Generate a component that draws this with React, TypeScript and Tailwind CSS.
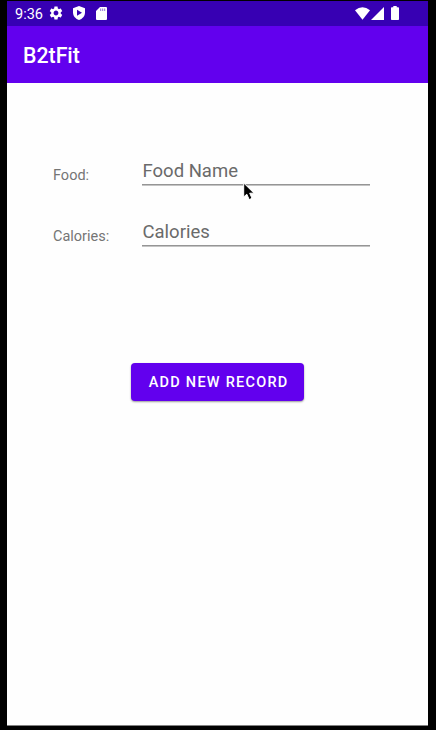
import React from "react";

function SettingsIcon() {
  return (
    <svg className="mb-px ml-[5px] h-[16px] w-[16px] shrink-0" viewBox="0 0 24 24" fill="#fff">
      <path d="M19.14 12.94c.04-.3.06-.61.06-.94 0-.32-.02-.64-.07-.94l2.03-1.58c.18-.14.23-.41.12-.61l-1.92-3.32c-.12-.22-.37-.29-.59-.22l-2.39.96c-.5-.38-1.03-.7-1.62-.94l-.36-2.54c-.04-.24-.24-.41-.48-.41h-3.84c-.24 0-.43.17-.47.41l-.36 2.54c-.59.24-1.13.57-1.62.94l-2.39-.96c-.22-.08-.47 0-.59.22L2.74 8.87c-.12.21-.08.47.12.61l2.03 1.58c-.05.3-.09.63-.09.94s.02.64.07.94l-2.03 1.58c-.18.14-.23.41-.12.61l1.92 3.32c.12.22.37.29.59.22l2.39-.96c.5.38 1.03.7 1.62.94l.36 2.54c.05.24.24.41.48.41h3.84c.24 0 .44-.17.47-.41l.36-2.54c.59-.24 1.13-.56 1.62-.94l2.39.96c.22.08.47 0 .59-.22l1.92-3.32c.12-.22.07-.47-.12-.61l-2.01-1.58zM12 15.6c-1.98 0-3.6-1.62-3.6-3.6s1.62-3.6 3.6-3.6 3.6 1.62 3.6 3.6-1.62 3.6-3.6 3.6z" />
    </svg>
  );
}

function StatusBar() {
  return (
    <div className="flex h-[25px] shrink-0 items-center bg-[#3700b3] pl-2 pr-7 text-white">
      <span className="w-[28px] whitespace-nowrap pt-[3px] text-[14.5px] leading-none">9:36</span>
      <SettingsIcon />
      <svg className="mb-px ml-[9px] h-[14px] w-[12px] shrink-0" viewBox="0 0 12 14">
        <path fill="#fff" d="M6 0 12 2.2V6.5C12 10 9.4 13 6 14 2.6 13 0 10 0 6.5V2.2Z" />
        <path fill="#3700b3" d="M4 3.8 9 6.8 4 9.8Z" />
      </svg>
      <svg className="ml-[11px] h-[13px] w-[11px] shrink-0" viewBox="0 0 11 13">
        <path fill="#fff" d="M4 0H10Q11 0 11 1V12Q11 13 10 13H1Q0 13 0 12V4Z" />
        <path stroke="#3700b3" strokeWidth=".8" strokeOpacity=".7" d="M4.7 1.5V4M6.7 1.5V4M8.7 1.5V4" />
      </svg>
      <div className="ml-auto flex items-center pb-px pr-px">
        <svg className="h-[13px] w-[15px]" viewBox="0 0 15 13">
          <path fill="#fff" d="M0 3.2Q7.5-2.8 15 3.2L7.5 12.8Z" />
        </svg>
        <svg className="ml-[1px] h-[13px] w-[13px]" viewBox="0 0 13 13">
          <path fill="#fff" d="M13 0V13H0Z" />
        </svg>
        <svg className="ml-[7px] h-[14px] w-[8px]" viewBox="0 0 8 14">
          <path fill="#fff" d="M2.3 0H5.7V1.2H7.2Q8 1.2 8 2V13.2Q8 14 7.2 14H.8Q0 14 0 13.2V2Q0 1.2.8 1.2H2.3Z" />
        </svg>
      </div>
    </div>
  );
}

function Field({ label, hint, children }: { label: string; hint: string; children?: React.ReactNode }) {
  return (
    <div className="flex h-[29px]">
      <div className="w-[89px] pt-[11px] text-[14.5px] leading-[17px] text-[#757575]">{label}</div>
      <div className="relative w-[228px] border-b border-[#959595] pt-[4px] text-[18.5px] leading-[22px] text-[#6a6a6a] shadow-[0_1px_0_#c4c4c4]">
        <span className="pl-[0.5px]">{hint}</span>
        {children}
      </div>
    </div>
  );
}

function Pointer() {
  return (
    <svg className="absolute left-[101px] top-[26px] h-[19px] w-[12px]" viewBox="0 0 12 19">
      <path
        d="M.7 1V15L3.8 12.2 6.2 17.6 9 16.3 6.7 11.2H11Z"
        fill="#000"
        stroke="#fff"
        strokeWidth="1"
      />
    </svg>
  );
}

export default function App() {
  return (
    <div className="h-[730px] w-[436px] bg-black pl-[7px] pr-[8px] pt-px font-['Roboto',sans-serif]">
      <div className="flex h-[725px] flex-col border-b border-[#808080] bg-[#fefefe]">
        <StatusBar />
        <header className="flex h-[57px] shrink-0 items-center bg-[#6200ee] pl-[16px] pt-[3px] text-[21.3px] font-medium text-white">
          B2tFit
        </header>
        <main className="flex flex-col pt-[73px]">
          <div className="flex flex-col gap-[32px] pl-[46px]">
            <Field label="Food:" hint="Food Name">
              <Pointer />
            </Field>
            <Field label="Calories:" hint="Calories" />
          </div>
          <button className="ml-[124.4px] mt-[117px] h-[37.5px] w-[172.5px] whitespace-nowrap rounded-[4px] bg-[#6200ee] pl-[2px] pt-[2px] text-[14.5px] font-medium tracking-[1.25px] text-white shadow-[0_1px_2px_rgba(0,0,0,0.4)]">
            ADD NEW RECORD
          </button>
        </main>
      </div>
    </div>
  );
}
